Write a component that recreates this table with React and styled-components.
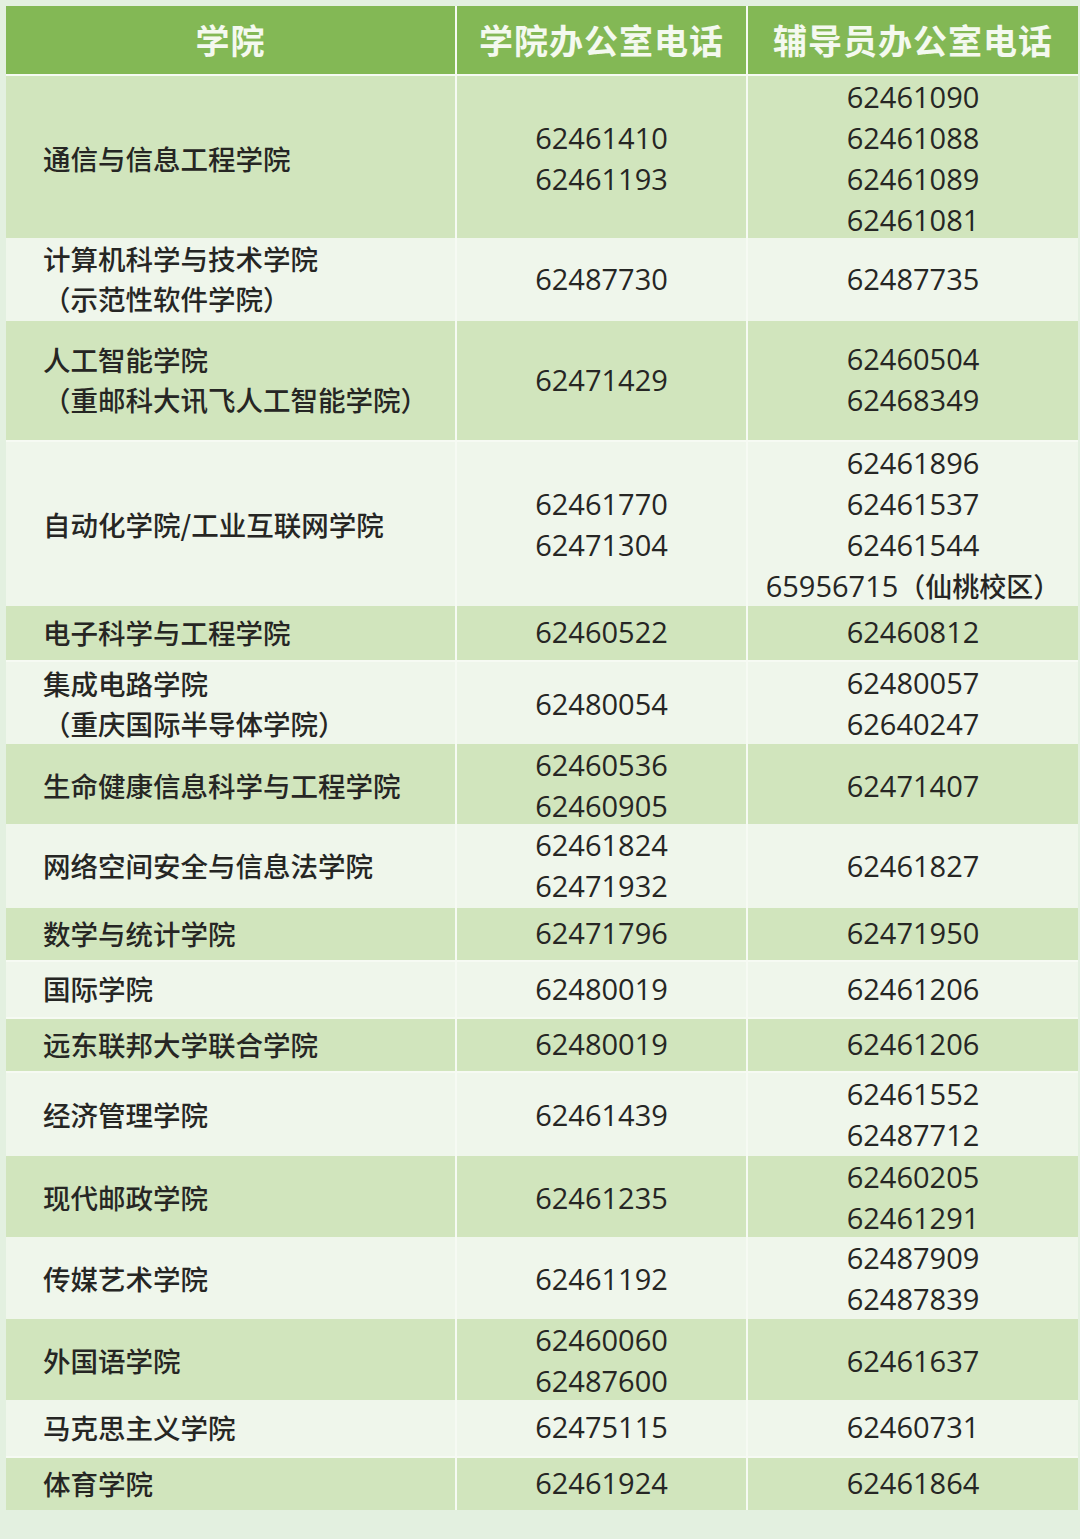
import React from "react";
import styled, { createGlobalStyle } from "styled-components";

const GlobalStyle = createGlobalStyle`
  html, body {
    margin: 0;
    padding: 0;
    background: #e3f0e0;
  }
  body {
    font-family: "Noto Sans CJK SC", "Noto Sans", sans-serif;
  }
`;

const Page = styled.main`
  width: 1080px;
  min-height: 1539px;
  box-sizing: border-box;
  padding: 6px 2px 0 6px;
  background: #e3f0e0;
`;

const Table = styled.section`
  display: flex;
  flex-direction: column;
  gap: 2px;
  background: #f6faf3;
  width: 1072px;
`;

const Row = styled.div`
  display: grid;
  grid-template-columns: 449px 289px 330px;
  gap: 2px;
  height: ${(p) => p.$height}px;
`;

const HeaderCell = styled.div`
  display: flex;
  align-items: center;
  justify-content: center;
  padding-bottom: 2px;
  background: #83b855;
  color: #f4f9ef;
  font-size: 34px;
  font-weight: 700;
  letter-spacing: 1px;
`;

const Cell = styled.div`
  display: flex;
  flex-direction: column;
  justify-content: center;
  align-items: ${(p) => (p.$left ? "flex-start" : "center")};
  padding-left: ${(p) => (p.$left ? "37px" : "0")};
  padding-bottom: 3px;
  background: ${(p) => (p.$dark ? "#d1e5bd" : "#eff6eb")};
  color: #262624;
  overflow: visible;
`;

const NameLine = styled.span`
  font-size: 27.5px;
  font-weight: 500;
  line-height: 40px;
  white-space: nowrap;
`;

const PhoneLine = styled.span`
  font-size: 29px;
  font-weight: 500;
  line-height: 41px;
  white-space: nowrap;
  font-family: "Open Sans", "Noto Sans CJK SC", sans-serif;
`;

const Note = styled.span`
  font-family: "Noto Sans CJK SC", sans-serif;
  font-size: 27px;
`;

const rows = [
  { h: 160, name: ["通信与信息工程学院"], office: ["62461410", "62461193"], counselor: ["62461090", "62461088", "62461089", "62461081"] },
  { h: 81, name: ["计算机科学与技术学院", "（示范性软件学院）"], office: ["62487730"], counselor: ["62487735"] },
  { h: 119, name: ["人工智能学院", "（重邮科大讯飞人工智能学院）"], office: ["62471429"], counselor: ["62460504", "62468349"] },
  { h: 162, name: ["自动化学院/工业互联网学院"], office: ["62461770", "62471304"], counselor: ["62461896", "62461537", "62461544", "65956715（仙桃校区）"] },
  { h: 54, name: ["电子科学与工程学院"], office: ["62460522"], counselor: ["62460812"] },
  { h: 80, name: ["集成电路学院", "（重庆国际半导体学院）"], office: ["62480054"], counselor: ["62480057", "62640247"] },
  { h: 78, name: ["生命健康信息科学与工程学院"], office: ["62460536", "62460905"], counselor: ["62471407"] },
  { h: 82, name: ["网络空间安全与信息法学院"], office: ["62461824", "62471932"], counselor: ["62461827"] },
  { h: 52, name: ["数学与统计学院"], office: ["62471796"], counselor: ["62471950"] },
  { h: 55, name: ["国际学院"], office: ["62480019"], counselor: ["62461206"] },
  { h: 52, name: ["远东联邦大学联合学院"], office: ["62480019"], counselor: ["62461206"] },
  { h: 81, name: ["经济管理学院"], office: ["62461439"], counselor: ["62461552", "62487712"] },
  { h: 79, name: ["现代邮政学院"], office: ["62461235"], counselor: ["62460205", "62461291"] },
  { h: 80, name: ["传媒艺术学院"], office: ["62461192"], counselor: ["62487909", "62487839"] },
  { h: 79, name: ["外国语学院"], office: ["62460060", "62487600"], counselor: ["62461637"] },
  { h: 56, name: ["马克思主义学院"], office: ["62475115"], counselor: ["62460731"] },
  { h: 52, name: ["体育学院"], office: ["62461924"], counselor: ["62461864"] },
];

function Phone({ value }) {
  const idx = value.indexOf("（");
  if (idx === -1) return <PhoneLine>{value}</PhoneLine>;
  return (
    <PhoneLine>
      {value.slice(0, idx)}
      <Note>{value.slice(idx)}</Note>
    </PhoneLine>
  );
}

export default function App() {
  return (
    <Page>
      <GlobalStyle />
      <Table>
        <Row $height={68}>
          <HeaderCell>学院</HeaderCell>
          <HeaderCell>学院办公室电话</HeaderCell>
          <HeaderCell>辅导员办公室电话</HeaderCell>
        </Row>
        {rows.map((row, i) => {
          const dark = i % 2 === 0;
          return (
            <Row key={i} $height={row.h}>
              <Cell $left $dark={dark}>
                {row.name.map((line) => (
                  <NameLine key={line}>{line}</NameLine>
                ))}
              </Cell>
              <Cell $dark={dark}>
                {row.office.map((p) => (
                  <Phone key={p} value={p} />
                ))}
              </Cell>
              <Cell $dark={dark}>
                {row.counselor.map((p) => (
                  <Phone key={p} value={p} />
                ))}
              </Cell>
            </Row>
          );
        })}
      </Table>
    </Page>
  );
}
